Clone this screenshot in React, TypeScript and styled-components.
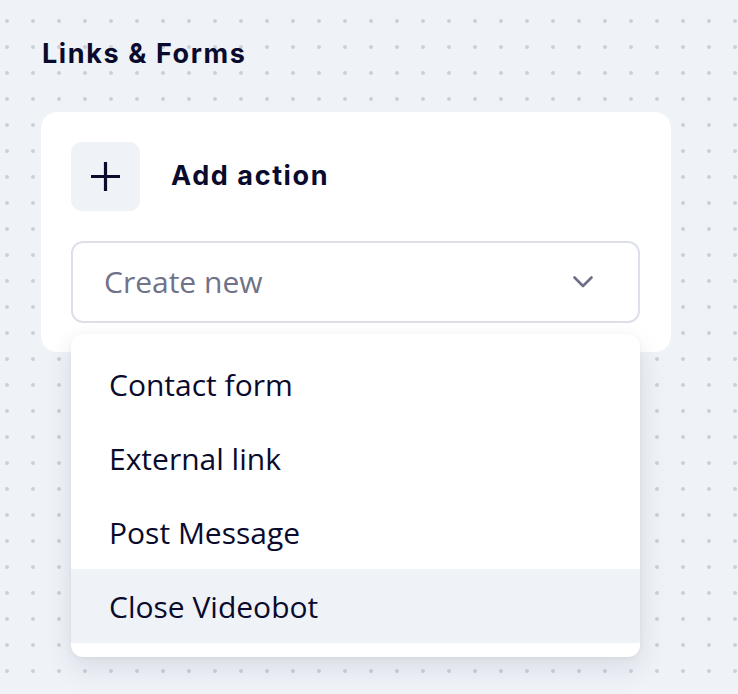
import React from "react";
import styled, { createGlobalStyle } from "styled-components";

const GlobalStyle = createGlobalStyle`
  html, body {
    margin: 0;
    padding: 0;
  }
  body {
    background-color: #eff2f7;
    background-image: radial-gradient(circle, #cdd1d9 1.8px, transparent 2.2px);
    background-size: 26px 26px;
    background-position: -6px 8px;
    min-height: 694px;
  }
`;

const Page = styled.div`
  padding: 37px 0 0 41px;
  width: 630px;
`;

const Title = styled.h2`
  margin: 0 0 0 1px;
  font-family: Inter, "Noto Sans", sans-serif;
  font-weight: 700;
  font-size: 27px;
  line-height: 34px;
  letter-spacing: 1.6px;
  color: #0a0b2c;
`;

const Card = styled.div`
  margin-top: 41px;
  background: #ffffff;
  border-radius: 16px;
  padding: 30px 31px 29px 30px;
  display: flex;
  flex-direction: column;
  gap: 30px;
`;

const Header = styled.div`
  display: flex;
  align-items: center;
  gap: 31px;
`;

const PlusButton = styled.button`
  width: 69px;
  height: 69px;
  border: none;
  border-radius: 11px;
  background: #eff2f7;
  display: flex;
  align-items: center;
  justify-content: center;
  padding: 0;
  cursor: pointer;
`;

const HeaderLabel = styled.span`
  font-family: Inter, "Noto Sans", sans-serif;
  font-weight: 700;
  font-size: 27px;
  letter-spacing: 1.6px;
  color: #0a0b2c;
  margin-top: -3px;
`;

const SelectWrap = styled.div`
  position: relative;
`;

const SelectBox = styled.div`
  height: 78px;
  border: 2px solid #dde0ea;
  border-radius: 12px;
  box-sizing: content-box;
  display: flex;
  align-items: center;
  justify-content: space-between;
  padding: 0 45px 0 31px;
`;

const Placeholder = styled.span`
  font-family: "Open Sans", sans-serif;
  font-size: 30px;
  color: #6f7288;
  margin-top: -2px;
`;

const Menu = styled.ul`
  position: absolute;
  top: 93px;
  left: 0;
  right: 0;
  margin: 0;
  padding: 13px 0 14px;
  list-style: none;
  background: #ffffff;
  border-radius: 12px;
  box-shadow: 0 10px 28px rgba(20, 28, 60, 0.1), 0 1px 4px rgba(20, 28, 60, 0.05);
  z-index: 5;
`;

const MenuItem = styled.li<{ $active?: boolean }>`
  height: 74px;
  display: flex;
  align-items: center;
  padding-left: 38px;
  font-family: "Open Sans", sans-serif;
  font-size: 30px;
  color: #0a0b2c;
  background: ${(p) => (p.$active ? "#eff2f7" : "transparent")};
`;

const PlusIcon = () => (
  <svg width="29" height="29" viewBox="0 0 29 29">
    <path d="M14.5 0v29M0 14.5h29" stroke="#0a0b2c" strokeWidth="3.2" fill="none" />
  </svg>
);

const Chevron = () => (
  <svg width="20" height="12" viewBox="0 0 20 12">
    <path
      d="M1.5 1.5L10 10l8.5-8.5"
      stroke="#6b6e85"
      strokeWidth="2.6"
      fill="none"
      strokeLinecap="round"
      strokeLinejoin="round"
    />
  </svg>
);

const options = ["Contact form", "External link", "Post Message", "Close Videobot"];

export default function App() {
  return (
    <>
      <GlobalStyle />
      <Page>
        <Title>Links &amp; Forms</Title>
        <Card>
          <Header>
            <PlusButton aria-label="Add action">
              <PlusIcon />
            </PlusButton>
            <HeaderLabel>Add action</HeaderLabel>
          </Header>
          <SelectWrap>
            <SelectBox>
              <Placeholder>Create new</Placeholder>
              <Chevron />
            </SelectBox>
            <Menu>
              {options.map((o, i) => (
                <MenuItem key={o} $active={i === options.length - 1}>
                  {o}
                </MenuItem>
              ))}
            </Menu>
          </SelectWrap>
        </Card>
      </Page>
    </>
  );
}
